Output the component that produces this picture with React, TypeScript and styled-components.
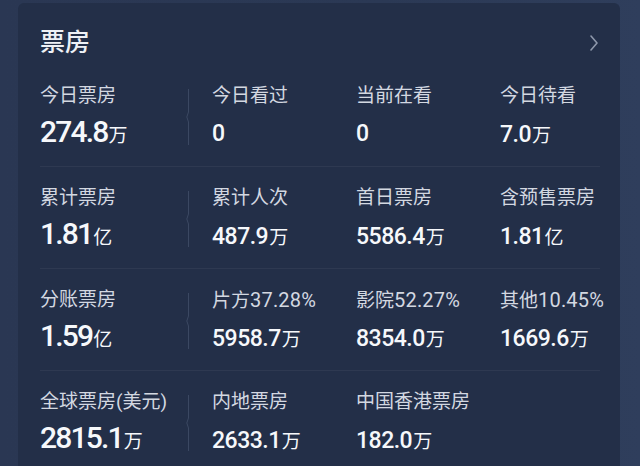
import React from "react";
import styled, { createGlobalStyle } from "styled-components";

const Global = createGlobalStyle`
  html, body {
    margin: 0;
    padding: 0;
    height: 100%;
    overflow: hidden;
    background: linear-gradient(to right, #2a3753 0%, #2b3955 60%, #2f3e5c 100%);
  }
  body {
    font-family: Roboto, "Noto Sans CJK SC", sans-serif;
  }
`;

const Card = styled.div`
  margin: 3px 20px 0 18px;
  width: 560px;
  padding: 0 20px 0 22px;
  min-height: 480px;
  background: #232f48;
  border-radius: 6px 6px 0 0;
  box-sizing: content-box;
`;

const Header = styled.div`
  display: flex;
  justify-content: space-between;
  align-items: center;
  height: 34px;
  padding-top: 23px;
  margin-bottom: 5px;
`;

const Title = styled.div`
  font-family: Roboto, "Noto Sans CJK SC", sans-serif;
  font-size: 25px;
  line-height: 34px;
  font-weight: 500;
  color: #eef1f6;
`;

const Chevron = styled.svg`
  width: 10px;
  height: 16px;
  margin-right: 1px;
  flex: none;
`;

const Row = styled.div<{ $last?: boolean }>`
  display: flex;
  align-items: flex-start;
  padding: 19px 0 17px;
  border-bottom: 1px solid ${(p) => (p.$last ? "transparent" : "rgba(255,255,255,0.05)")};
`;

const Cell = styled.div<{ $w?: number }>`
  display: flex;
  flex-direction: column;
  ${(p) => (p.$w ? `width: ${p.$w}px; flex: none;` : "flex: 1;")}
`;

const Label = styled.div`
  font-family: Roboto, "Noto Sans CJK SC", sans-serif;
  font-size: 19px;
  line-height: 24px;
  height: 24px;
  margin-bottom: 7px;
  color: #d3d8e1;
  white-space: nowrap;
`;

const Pct = styled.span`
  font-size: 20px;
  letter-spacing: 0.2px;
`;

const Value = styled.div<{ $big?: boolean }>`
  font-family: Roboto, "Noto Sans CJK SC", sans-serif;
  font-weight: 500;
  color: #f6f8fb;
  height: 34px;
  white-space: nowrap;
  font-size: ${(p) => (p.$big ? "30px" : "23px")};
  line-height: ${(p) => (p.$big ? "34px" : "38.8px")};
  letter-spacing: ${(p) => (p.$big ? "-1.8px" : "-0.5px")};
`;

const Unit = styled.span`
  font-family: "Noto Sans CJK SC", sans-serif;
  font-size: 19px;
  font-weight: 400;
  letter-spacing: 0;
  margin-left: 1px;
`;

const DividerSvg = styled.svg`
  width: 27px;
  height: 56px;
  flex: none;
  align-self: center;
`;

const Divider = () => (
  <DividerSvg viewBox="0 0 27 56">
    <path d="M3.5 0 V23 L1.8 28 L3.5 33 V56" fill="none" stroke="#3b4862" strokeWidth="1" />
  </DividerSvg>
);

type Item = { label: string; pct?: string; num: string; unit?: string };

const rows: Item[][] = [
  [
    { label: "今日票房", num: "274.8", unit: "万" },
    { label: "今日看过", num: "0" },
    { label: "当前在看", num: "0" },
    { label: "今日待看", num: "7.0", unit: "万" },
  ],
  [
    { label: "累计票房", num: "1.81", unit: "亿" },
    { label: "累计人次", num: "487.9", unit: "万" },
    { label: "首日票房", num: "5586.4", unit: "万" },
    { label: "含预售票房", num: "1.81", unit: "亿" },
  ],
  [
    { label: "分账票房", num: "1.59", unit: "亿" },
    { label: "片方", pct: "37.28%", num: "5958.7", unit: "万" },
    { label: "影院", pct: "52.27%", num: "8354.0", unit: "万" },
    { label: "其他", pct: "10.45%", num: "1669.6", unit: "万" },
  ],
  [
    { label: "全球票房(美元)", num: "2815.1", unit: "万" },
    { label: "内地票房", num: "2633.1", unit: "万" },
    { label: "中国香港票房", num: "182.0", unit: "万" },
  ],
];

const Stat = ({ item, big, w }: { item?: Item; big?: boolean; w?: number }) => (
  <Cell $w={w}>
    {item && (
      <>
        <Label>
          {item.label}
          {item.pct && <Pct>{item.pct}</Pct>}
        </Label>
        <Value $big={big}>
          {item.num}
          {item.unit && <Unit>{item.unit}</Unit>}
        </Value>
      </>
    )}
  </Cell>
);

export default function App() {
  return (
    <>
      <Global />
      <Card>
        <Header>
          <Title>票房</Title>
          <Chevron viewBox="0 0 10 16">
            <polyline points="2,1 8,8 2,15" fill="none" stroke="#8e98ab" strokeWidth="1.6" strokeLinecap="round" strokeLinejoin="round" />
          </Chevron>
        </Header>
        {rows.map((r, i) => (
          <Row key={i} $last={i === rows.length - 1}>
            <Stat item={r[0]} big w={145} />
            <Divider />
            <Stat item={r[1]} w={144} />
            <Stat item={r[2]} w={144} />
            <Stat item={r[3]} />
          </Row>
        ))}
      </Card>
    </>
  );
}
